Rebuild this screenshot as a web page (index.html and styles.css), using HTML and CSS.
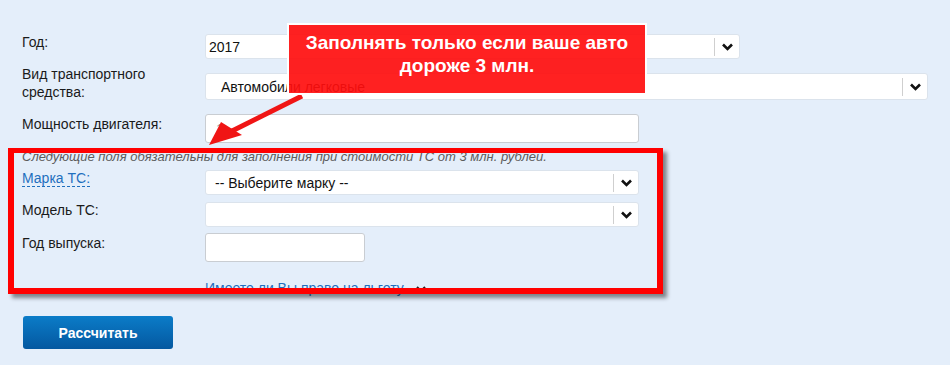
FILE: index.html
```html
<!DOCTYPE html>
<html lang="ru">
<head>
  <meta charset="UTF-8">
  <title>Калькулятор ОСАГО</title>
  <link rel="stylesheet" href="styles.css">
</head>
<body>

  <main class="page">
    <form class="calc">
      <div class="row r-year">
        <label class="label">Год:</label>
        <div class="select w-year">
          <span class="value">2017</span>
          <span class="caret"><svg width="11" height="8" viewBox="0 0 11 8"><path d="M1 1.5 L5.5 6 L10 1.5" fill="none" stroke="#111" stroke-width="2.6"/></svg></span>
        </div>
      </div>

      <div class="row r-type">
        <label class="label two-line">Вид транспортного<br>средства:</label>
        <div class="select w-type pad-wide">
          <span class="value">Автомобили легковые</span>
          <span class="caret"><svg width="11" height="8" viewBox="0 0 11 8"><path d="M1 1.5 L5.5 6 L10 1.5" fill="none" stroke="#111" stroke-width="2.6"/></svg></span>
        </div>
      </div>

      <div class="row r-power">
        <label class="label">Мощность двигателя:</label>
        <div class="input w-mid"><span class="value faded">1..</span></div>
      </div>

      <p class="note">Следующие поля обязательны для заполнения при стоимости ТС от 3 млн. рублей.</p>

      <div class="row r-brand">
        <label class="label"><a class="dashed" href="#">Марка ТС:</a></label>
        <div class="select w-mid pad-mid">
          <span class="value">-- Выберите марку --</span>
          <span class="caret"><svg width="11" height="8" viewBox="0 0 11 8"><path d="M1 1.5 L5.5 6 L10 1.5" fill="none" stroke="#111" stroke-width="2.6"/></svg></span>
        </div>
      </div>

      <div class="row r-model">
        <label class="label">Модель ТС:</label>
        <div class="select w-mid">
          <span class="value"></span>
          <span class="caret"><svg width="11" height="8" viewBox="0 0 11 8"><path d="M1 1.5 L5.5 6 L10 1.5" fill="none" stroke="#111" stroke-width="2.6"/></svg></span>
        </div>
      </div>

      <div class="row r-made">
        <label class="label">Год выпуска:</label>
        <div class="input w-small"></div>
      </div>

      <div class="row r-benefit">
        <span></span>
        <a class="benefit" href="#">Имеете ли Вы право на льготу <svg width="10" height="7" viewBox="0 0 10 7"><path d="M1 1 L5 5 L9 1" fill="none" stroke="#222" stroke-width="2"/></svg></a>
      </div>

      <button type="button" class="btn">Рассчитать</button>
    </form>

    <!-- пометки поверх скриншота -->
    <div class="frame"></div>
    <svg class="arrow" width="950" height="365" viewBox="0 0 950 365">
      <line x1="302" y1="96" x2="228" y2="133" stroke="#f01515" stroke-width="5"/>
      <polygon points="209,145 221,122 242,135" fill="#f01515"/>
    </svg>
    <div class="callout">Заполнять только если ваше авто<br>дороже 3 млн.</div>
  </main>

</body>
</html>
```

FILE: styles.css
```css
/* основа */
body {
  margin: 0;
  background: #e4eefa;
  font-family: "Liberation Sans", Arial, sans-serif;
  font-size: 14px;
  color: #1a1a1a;
}

.page {
  position: relative;
  width: 950px;
  height: 365px;
  overflow: hidden;
}

/* форма */
.calc {
  display: flex;
  flex-direction: column;
  align-items: flex-start;
  padding: 34px 0 0 22px;
}

.row {
  display: grid;
  grid-template-columns: 183px auto;
  align-items: center;
}
.r-type { margin-top: 13px; }
.r-power { margin-top: 13px; }
.r-brand { margin-top: 5px; }
.r-model { margin-top: 7px; }
.r-made { margin-top: 6px; }
.r-benefit { margin-top: 17px; }

.label {
  line-height: 18px;
  margin-top: -10px;
}
.label.two-line {
  margin-top: -7px;
}

.select, .input {
  box-sizing: border-box;
  background: #fff;
  border-radius: 3px;
  display: flex;
  align-items: center;
}
.select {
  height: 25px;
  border: 1px solid #dbe3ec;
  padding-left: 3px;
  color: #111;
}
.input {
  height: 29px;
  border: 1px solid #c9cdd2;
  padding-left: 10px;
}

.value {
  flex: 1;
  white-space: nowrap;
}
.faded {
  color: #999;
}

.caret {
  width: 23px;
  height: 18px;
  border-left: 1px solid #cfcfcf;
  display: flex;
  align-items: center;
  justify-content: center;
  padding-left: 1px;
}

.w-year { width: 535px; }
.w-type { width: 723px; height: 27px; }
.w-mid { width: 434px; }
.w-small { width: 160px; }
.pad-wide { padding-left: 15px; }
.pad-mid { padding-left: 9px; }

.note {
  margin: 6px 0 0;
  font-size: 13px;
  font-style: italic;
  color: #5c5c5c;
  line-height: 16px;
}

a.dashed {
  color: #1f6fbe;
  text-decoration: none;
  border-bottom: 1px dashed #1f6fbe;
}

.benefit {
  color: #1f6fbe;
  text-decoration: none;
  line-height: 18px;
}
.benefit svg {
  margin-left: 8px;
}

/* кнопка */
.btn {
  width: 150px;
  height: 33px;
  margin: 19px 0 0 1px;
  border: none;
  border-radius: 3px;
  background: linear-gradient(#0b7cc8, #0458a0);
  color: #fff;
  font-family: "Liberation Sans", Arial, sans-serif;
  font-size: 14px;
  font-weight: bold;
  cursor: pointer;
}

/* красная рамка */
.frame {
  position: absolute;
  left: 8px;
  top: 148px;
  width: 643px;
  height: 135px;
  border: 6px solid #ff0000;
  border-top-width: 5px;
  box-shadow: 4px 4px 4px rgba(0, 0, 0, 0.45);
}

.arrow {
  position: absolute;
  left: 0;
  top: 0;
}

/* выноска (полупрозрачная, текст под ней просвечивает) */
.callout {
  position: absolute;
  left: 287px;
  top: 23px;
  width: 356px;
  height: 62px;
  border: 2px solid #fff;
  background: rgba(255, 14, 14, 0.92);
  color: #fff;
  font-size: 19px;
  font-weight: bold;
  line-height: 23px;
  text-align: center;
  padding-top: 6px;
}
```
